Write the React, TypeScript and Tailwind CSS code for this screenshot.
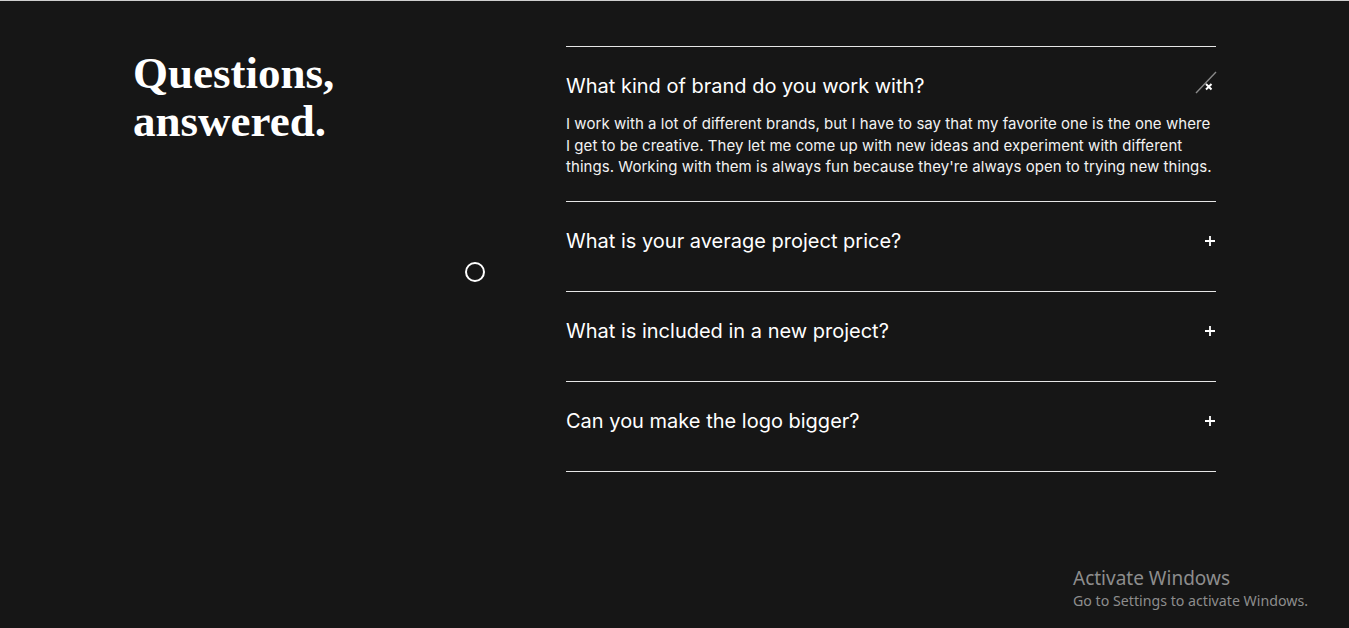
import { useState } from "react";

interface Faq {
  question: string;
  answer: string;
}

const faqs: Faq[] = [
  {
    question: "What kind of brand do you work with?",
    answer:
      "I work with a lot of different brands, but I have to say that my favorite one is the one where I get to be creative. They let me come up with new ideas and experiment with different things. Working with them is always fun because they're always open to trying new things.",
  },
  {
    question: "What is your average project price?",
    answer: "It depends on the scope, but most projects land somewhere in the middle.",
  },
  {
    question: "What is included in a new project?",
    answer: "Strategy, design, revisions and a handoff with every file you need.",
  },
  {
    question: "Can you make the logo bigger?",
    answer: "Yes. Always yes.",
  },
];

function PlusIcon() {
  return (
    <svg width="12" height="12" viewBox="0 0 12 12" className="shrink-0">
      <path d="M6 1v10M1 6h10" stroke="#ffffff" strokeWidth="1.8" />
    </svg>
  );
}

function OpenIcon() {
  return (
    <svg width="22" height="24" viewBox="0 0 22 24" className="shrink-0 -mr-[1px] -mt-[8px]">
      <path d="M1 23 L21 2" stroke="#8a8a8a" strokeWidth="1.4" />
      <path d="M11 14 L16.5 19.5 M16.5 14 L11 19.5" stroke="#ffffff" strokeWidth="2" />
    </svg>
  );
}

export default function App() {
  const [open, setOpen] = useState<number>(0);

  return (
    <div className="relative h-[628px] overflow-hidden border-t border-[#cfcfcf] bg-[#161616] text-white">
      <div className="flex pl-[133px] pt-[45px]">
        <div className="w-[433px] shrink-0">
          <h2 className="mt-[3px] font-['Liberation_Serif',serif] text-[45px] font-bold leading-[48px]">
            Questions,
            <br />
            answered.
          </h2>
        </div>

        <div className="w-[650px] border-b border-[#e6e6e6] font-['Inter',sans-serif]">
          {faqs.map((f, i) => {
            const isOpen = open === i;
            return (
              <div
                key={f.question}
                className={`border-t border-[#e6e6e6] pt-[27px] ${isOpen ? "pb-[23px]" : "pb-[38px]"}`}
              >
                <button
                  onClick={() => setOpen(isOpen ? -1 : i)}
                  className="flex w-full items-center justify-between text-left"
                >
                  <span className="text-[20px] leading-[24px]">{f.question}</span>
                  {isOpen ? <OpenIcon /> : <PlusIcon />}
                </button>
                {isOpen && (
                  <p className="mt-[15px] text-[15px] leading-[21.5px] tracking-[0.05px] text-[#f2f2f2]">
                    {f.answer}
                  </p>
                )}
              </div>
            );
          })}
        </div>
      </div>

      {/* cursor follower */}
      <div className="absolute left-[465px] top-[261px] h-[20px] w-[20px] rounded-full border-2 border-white" />

      <div className="absolute left-[1073px] top-[565px] font-['Noto_Sans',sans-serif] text-[#8d8d8d]">
        <div className="text-[19px] leading-[25px]">Activate Windows</div>
        <div className="text-[14.2px] leading-[20px]">Go to Settings to activate Windows.</div>
      </div>
    </div>
  );
}
